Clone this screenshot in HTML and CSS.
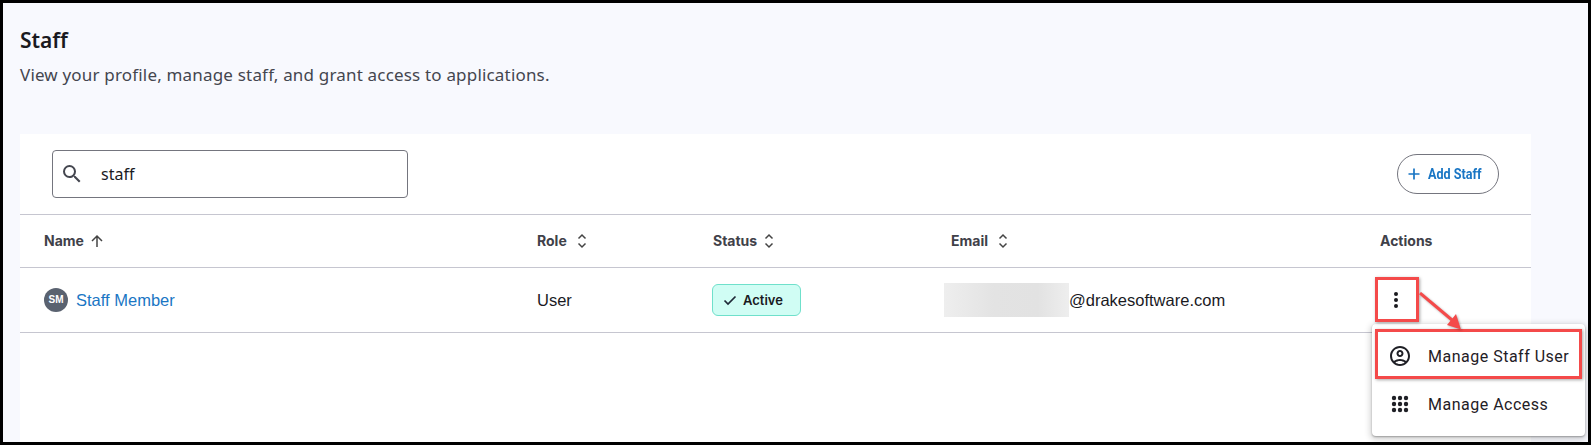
FILE: index.html
```html
<!DOCTYPE html>
<html lang="en">
<head>
<meta charset="utf-8">
<title>Staff</title>
<link rel="stylesheet" href="styles.css">
</head>
<body>
<div class="frame">
  <header class="page-head">
    <h1 class="title">Staff</h1>
    <p class="subtitle">View your profile, manage staff, and grant access to applications.</p>
  </header>
  <section class="card">
    <div class="toolbar">
      <div class="search">
        <svg class="search-icon" viewBox="0 0 24 24" width="24" height="24"><path d="M15.5 14h-.79l-.28-.27A6.47 6.47 0 0 0 16 9.5 6.5 6.5 0 1 0 9.5 16c1.61 0 3.09-.59 4.23-1.57l.27.28v.79l5 4.99L20.49 19l-4.99-5zm-6 0C7.01 14 5 11.99 5 9.5S7.01 5 9.5 5 14 7.01 14 9.5 11.99 14 9.5 14z"/></svg>
        <span class="search-text">staff</span>
      </div>
      <button class="add-btn" type="button">
        <svg viewBox="0 0 14 14" width="14" height="14"><path d="M7 1.500v11M1.500 7h11" stroke="#1a76c4" stroke-width="1.700" fill="none"/></svg>
        <span class="add-label">Add Staff</span>
      </button>
    </div>
    <div class="row head-row">
      <div class="th th-name">Name
        <svg class="sort" viewBox="0 0 14 14" width="14" height="14"><path d="M7 13V2M2 7l5-5 5 5" stroke="#444" stroke-width="1.500" fill="none"/></svg>
      </div>
      <div class="th th-role">Role
        <svg class="sort" viewBox="0 0 10 16" width="10" height="16"><path d="M1.500 5.500 5 2l3.500 3.500M1.500 10.500 5 14l3.500-3.500" stroke="#444" stroke-width="1.500" fill="none"/></svg>
      </div>
      <div class="th th-status">Status
        <svg class="sort" viewBox="0 0 10 16" width="10" height="16"><path d="M1.500 5.500 5 2l3.500 3.500M1.500 10.500 5 14l3.500-3.500" stroke="#444" stroke-width="1.500" fill="none"/></svg>
      </div>
      <div class="th th-email">Email
        <svg class="sort" viewBox="0 0 10 16" width="10" height="16"><path d="M1.500 5.500 5 2l3.500 3.500M1.500 10.500 5 14l3.500-3.500" stroke="#444" stroke-width="1.500" fill="none"/></svg>
      </div>
      <div class="th">Actions</div>
    </div>
    <div class="row body-row">
      <div class="td name-cell"><span class="avatar">SM</span><a class="link">Staff Member</a></div>
      <div class="td">User</div>
      <div class="td"><span class="badge"><svg viewBox="0 0 14 14" width="14" height="14"><path d="M1.500 7.500 5 11l7.500-7.500" stroke="#1f2937" stroke-width="1.700" fill="none"/></svg>Active</span></div>
      <div class="td email-cell"><span class="redact"></span><span>@drakesoftware.com</span></div>
      <div class="td actions-cell">
        <svg class="kebab" viewBox="0 0 6 18" width="6" height="18"><circle cx="3" cy="3" r="2"/><circle cx="3" cy="9" r="2"/><circle cx="3" cy="15" r="2"/></svg>
      </div>
    </div>
  </section>

  <div class="menu">
    <div class="menu-item">
      <svg viewBox="0 0 24 24" width="24" height="24"><path d="M12 2C6.480 2 2 6.480 2 12s4.480 10 10 10 10-4.480 10-10S17.520 2 12 2zM7.350 18.500C8.660 17.560 10.260 17 12 17s3.340.56 4.650 1.500C15.340 19.440 13.740 20 12 20s-3.340-.56-4.650-1.500zm10.790-1.380C16.450 15.800 14.320 15 12 15s-4.450.8-6.140 2.120A7.960 7.960 0 0 1 4 12c0-4.420 3.580-8 8-8s8 3.580 8 8c0 1.950-.7 3.730-1.860 5.120zM12 6c-1.930 0-3.500 1.570-3.500 3.500S10.070 13 12 13s3.500-1.570 3.500-3.500S13.930 6 12 6zm0 5c-.83 0-1.500-.67-1.500-1.500S11.170 8 12 8s1.500.67 1.500 1.500S12.830 11 12 11z"/></svg>
      <span>Manage Staff User</span>
    </div>
    <div class="menu-item">
      <svg viewBox="0 0 24 24" width="24" height="24"><circle cx="6" cy="6" r="2.200"/><circle cx="12" cy="6" r="2.200"/><circle cx="18" cy="6" r="2.200"/><circle cx="6" cy="12" r="2.200"/><circle cx="12" cy="12" r="2.200"/><circle cx="18" cy="12" r="2.200"/><circle cx="6" cy="18" r="2.200"/><circle cx="12" cy="18" r="2.200"/><circle cx="18" cy="18" r="2.200"/></svg>
      <span>Manage Access</span>
    </div>
  </div>

  <div class="callout callout-kebab"></div>
  <div class="callout callout-item"></div>
  <svg class="arrow" viewBox="0 0 60 50" width="60" height="50"><path d="M1 1 33 28" stroke="#f44a4a" stroke-width="3" fill="none"/><path d="M42 37.500 28 33 37 22z" fill="#f44a4a"/></svg>
</div>
</body>
</html>
```
FILE: styles.css
```css
* { box-sizing: border-box; }
html, body { margin: 0; padding: 0; height: 100%; }
body { overflow: hidden; background: #000; }

.frame {
  position: relative;
  width: 1591px;
  height: 445px;
  border: 3px solid #000;
  background: #f8f9fe;
  padding: 0 0 0 17px;
  overflow: hidden;
  font-family: "Liberation Sans", Arial, sans-serif;
}

.page-head { height: 131px; padding-top: 22px; }
.title {
  margin: 0;
  font: 600 21px/30px "Noto Sans", sans-serif;
  color: #1a1a1f;
}
.subtitle {
  margin: 8px 0 0;
  font: 400 17px/24px "Noto Sans", sans-serif;
  letter-spacing: .18px;
  color: #44464f;
}

.card {
  width: 1511px;
  height: 320px;
  background: #fff;
}

.toolbar {
  height: 81px;
  display: flex;
  align-items: flex-start;
  justify-content: space-between;
  padding: 16px 31px 0 32px;
  border-bottom: 1px solid #c6c6d0;
}
.search {
  width: 356px;
  height: 48px;
  border: 1px solid #74757e;
  border-radius: 4px;
  display: flex;
  align-items: center;
  padding-left: 7px;
  gap: 17px;
}
.search-icon { fill: #44464f; }
.search-text {
  font: 400 16px/24px "Noto Sans", sans-serif;
  color: #1a1a1f;
}
.add-btn {
  width: 102px;
  height: 40px;
  margin: 4px 1px 0 0;
  border: 1px solid #74757e;
  border-radius: 20px;
  background: #fff;
  padding: 0 0 0 9px;
  display: flex;
  align-items: center;
  gap: 7px;
  color: #1a76c4;
  font: 700 15px/16px "Roboto", sans-serif;
}
.add-label {
  display: block;
  width: 55px;
  white-space: nowrap;
  transform: scaleX(.84);
  transform-origin: left center;
}

.row {
  display: grid;
  grid-template-columns: 493px 176px 238px 429px 1fr;
  padding-left: 24px;
  border-bottom: 1px solid #c6c6d0;
  align-items: center;
}
.head-row { height: 53px; }
.body-row { height: 65px; }

.th {
  display: flex;
  align-items: center;
  gap: 8px;
  font: 700 14px/16px "Inter", sans-serif;
  color: #3f4149;
}
.th-name { gap: 6px; }
.th-role { gap: 10px; }
.th-status { gap: 7px; }
.th-email { gap: 10px; }
.td {
  font: 400 16.500px/22px "Liberation Sans", Arial, sans-serif;
  color: #1a1a1f;
}

.name-cell { display: flex; align-items: center; gap: 8px; }
.avatar {
  width: 24px;
  height: 24px;
  border-radius: 50%;
  background: #5a6270;
  color: #fff;
  font: 700 10px/24px "Liberation Sans", sans-serif;
  text-align: center;
}
.link { color: #1a76c4; }

.badge {
  display: inline-flex;
  align-items: center;
  gap: 6px;
  margin-left: -1px;
  width: 89px;
  height: 32px;
  padding-left: 10px;
  background: #d0fdf4;
  border: 1px solid #6fe0cb;
  border-radius: 6px;
  font: 600 13px/16px "Inter", sans-serif;
  color: #1a1a1f;
}

.email-cell { display: flex; align-items: center; margin-left: -7px; }
.redact {
  width: 125px;
  height: 34px;
  background: linear-gradient(90deg, #eeeeee 0%, #e3e3e3 40%, #e2e2e2 75%, #eeeeee 100%);
}

.actions-cell { padding-left: 13px; }
.kebab { display: block; fill: #1a1a1f; }

.menu {
  position: absolute;
  left: 1369px;
  top: 321px;
  width: 213px;
  height: 112px;
  padding-top: 8px;
  background: #fff;
  border-radius: 4px;
  box-shadow: 0 2px 6px 2px rgba(0,0,0,.16), 0 1px 2px rgba(0,0,0,.3);
}
.menu-item {
  height: 48px;
  display: flex;
  align-items: center;
  padding: 2px 0 0 16px;
  gap: 16px;
  font: 400 16px/24px "Roboto", sans-serif;
  letter-spacing: .5px;
  color: #1f2026;
}
.menu-item svg { fill: #1f2026; width: 24px; height: 24px; margin-top: -2px; }

.callout {
  position: absolute;
  border: 3px solid #f44a4a;
  box-shadow: 1px 1px 3px rgba(0,0,0,.35);
}
.callout-kebab { left: 1372px; top: 274px; width: 44px; height: 45px; }
.callout-item { left: 1372px; top: 326px; width: 207px; height: 50px; }

.arrow {
  position: absolute;
  left: 1416px;
  top: 289px;
  filter: drop-shadow(1px 1px 1px rgba(0,0,0,.3));
}
```
